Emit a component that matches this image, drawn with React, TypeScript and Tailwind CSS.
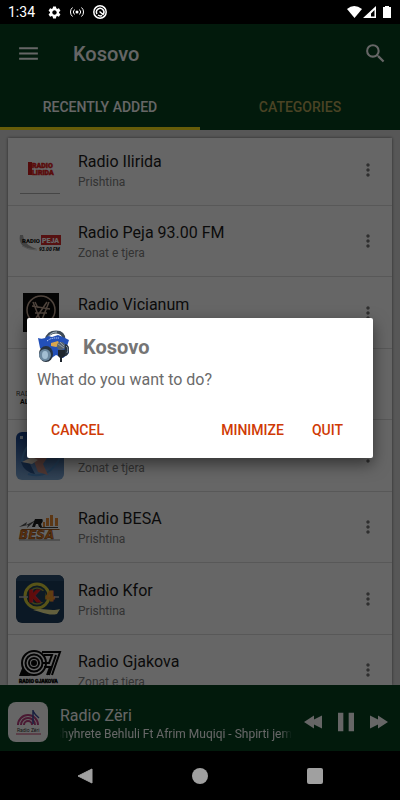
import { useState, type ReactNode } from 'react';
import { MdMenu, MdMoreVert, MdPause, MdSearch, MdSettings } from 'react-icons/md';

interface Station {
  name: string;
  city: string;
  logo: ReactNode;
}

function IliridaLogo() {
  return (
    <svg viewBox="0 0 48 48" className="size-full" aria-hidden="true">
      <g fontSize="7" fontWeight="900" fill="#e02020" stroke="#e02020" strokeWidth="0.500">
        <text x="16" y="22">RADIO</text>
        <text x="16" y="29">LIRIDA</text>
      </g>
      <rect x="12" y="16" width="4" height="13" fill="#d01c1c" />
      <path d="M4 47.500H44" stroke="#b0b0b0" />
    </svg>
  );
}

function PejaLogo() {
  return (
    <svg viewBox="0 0 48 48" className="size-full" aria-hidden="true">
      <path d="M4 18c-2 9 4 15 17 14-6-2-13-5-14-14z" fill="#a8a8a8" />
      <path d="M6 29q6 4 15 4" stroke="#cfcfcf" fill="none" />
      <rect x="25" y="18" width="20" height="10" fill="#d62b2b" />
      <text x="6" y="26" fontSize="6" fontWeight="900" fill="#111">RADIO</text>
      <text x="26" y="26" fontSize="7" fontWeight="900" fill="#fff">PEJA</text>
      <text x="23" y="34" fontSize="5" fontWeight="900" fontStyle="italic" fill="#222">93.00 FM</text>
    </svg>
  );
}

function VicianumLogo() {
  return (
    <svg viewBox="0 0 48 48" className="size-full" aria-hidden="true">
      <rect x="7" y="4" width="36" height="39" fill="#0a0a0a" />
      <g fill="none" stroke="#c6ab98" strokeWidth="1.500">
        <circle cx="25" cy="21" r="14" />
        <path d="M17 13l8 20 8-20M19 13l3 6M31 13L20 29M16 17l18 3M19 24h12" />
      </g>
    </svg>
  );
}

function AlbaLogo() {
  return (
    <svg viewBox="0 0 48 48" className="size-full" aria-hidden="true">
      <text x="0" y="36" fontSize="7" fill="#444">RADIO</text>
      <text x="4" y="44" fontSize="7" fontWeight="700" fill="#111">ALBA</text>
    </svg>
  );
}

function BlueLogo() {
  return (
    <svg viewBox="0 0 48 48" className="size-full rounded-md" aria-hidden="true">
      <defs>
        <linearGradient id="sky" x1="0" y1="0" x2="0" y2="1">
          <stop offset="0" stopColor="#123f8c" />
          <stop offset="1" stopColor="#7fa9d4" />
        </linearGradient>
      </defs>
      <rect width="48" height="48" fill="url(#sky)" />
      <rect x="4" y="4" width="3" height="3" fill="#c9d6e6" />
      <path d="M6 30Q8 8 30 6M12 42q20 6 32-16" fill="none" stroke="#4f8cc8" strokeWidth="2" />
      <path d="M16 24l15 2-4 6 5 11-10-3z" fill="#c58a80" />
      <path d="M5 30q3 10 14 12l-6-12z" fill="#2b5590" />
      <path d="M6 30l10-5 6 3-6 4z" fill="#eadfce" />
    </svg>
  );
}

function BesaLogo() {
  return (
    <svg viewBox="0 0 48 48" className="size-full" aria-hidden="true">
      <path d="M3 24l8-5-1 3 10-5 8-1-9 2-8 7 1-3z" fill="#555" />
      <path d="M16 24l3-8h7q2 2-1 5l1 3h-3l-1-3h-2l-1 3z" fill="#1c1c1c" />
      <path d="M27 24v-5h2v5zM30 23v-8h3v8zM34 23V12h3v11zM39 23v-8h3v8z" fill="#e58a35" />
      <path d="M24 24h18v1H24z" fill="#444" />
      <path d="M6 26h38l-1 1H5z" fill="#a85b1c" />
      <text x="3" y="36" fontSize="12" fontWeight="900" fontStyle="italic" fontFamily="DejaVu Sans" fill="#ea7c22" stroke="#6b3b16" strokeWidth="0.500">BESA</text>
      <path d="M3 37h41" stroke="#8b8b8b" />
    </svg>
  );
}

function KforLogo() {
  return (
    <svg viewBox="0 0 48 48" className="size-full rounded-md" aria-hidden="true">
      <rect width="48" height="48" fill="#1d3c5c" />
      <rect width="48" height="6" fill="#2c4f70" />
      <circle cx="21" cy="21" r="12" fill="#22425a" stroke="#ddd23c" strokeWidth="3" />
      <circle cx="21" cy="21" r="8" fill="none" stroke="#99a040" strokeWidth="1.500" />
      <path d="M3 22h9M38 22h5" stroke="#b9b9b9" strokeWidth="1.500" />
      <rect x="12" y="16" width="17" height="11" fill="#22425a" />
      <text x="12" y="27" fontSize="15" fontWeight="900" fontFamily="DejaVu Sans" fill="#f02020" stroke="#f02020">K</text>
      <text x="29" y="26" fontSize="14" fontWeight="900" fontFamily="DejaVu Sans" fill="#f39a2c" stroke="#f39a2c">4</text>
      <path d="M17 35c10-3 17 2 27-1l-3 5c-9 2-14-2-24-4z" fill="#f4ee9a" />
    </svg>
  );
}

function GjakovaLogo() {
  return (
    <svg viewBox="0 0 48 48" className="size-full" aria-hidden="true">
      <g fill="none" stroke="#080808" strokeWidth="2">
        <circle cx="18" cy="17" r="12" />
        <circle cx="18" cy="17" r="8.500" />
        <circle cx="18" cy="17" r="5" />
        <circle cx="18" cy="17" r="2" fill="#080808" />
        <path d="M27 17h6l3-8h-8M26 6h18l-8 23M40 9l-7 20M28 21h6l-3 8" />
      </g>
      <path d="M7 20q2 8 9 10H3z" fill="#080808" />
      <text x="3" y="37" fontSize="5" fontWeight="900" fill="#080808" stroke="#080808" strokeWidth="0.400">RADIO GJAKOVA</text>
    </svg>
  );
}

function ZeriLogo() {
  return (
    <svg viewBox="0 0 40 40" className="size-full" aria-hidden="true">
      <g fill="none" stroke="#b8407f" strokeWidth="2">
        <path d="M10 23a10 10 0 0 1 20 0" />
        <path d="M13 23a7 7 0 0 1 14 0" />
        <path d="M16 23a4 4 0 0 1 8 0" />
      </g>
      <path d="M25 8v14M25 9q2 4 6 7" stroke="#3c4c9c" strokeWidth="1.500" fill="none" />
      <text x="9" y="30" fontSize="5" fill="#333">Radio Zëri</text>
      <path d="M8 32h25" stroke="#c23a68" />
    </svg>
  );
}

function AppLogo() {
  return (
    <svg viewBox="0 0 34 34" className="size-[34px] shrink-0" aria-hidden="true">
      <path d="M9 10Q11 2 19 2t8 8" fill="none" stroke="#3d4a57" strokeWidth="3" />
      <path d="M11 7Q14 2 20 2" fill="none" stroke="#a9bac9" />
      <path d="M1 8q6 2 10-2l4 1 6-2 5 2 6 3-2 6 2 7-6 5-7-3-6 4-6-8-4-3z" fill="#2350b8" />
      <path d="M10 11l3-2 4-1h5" stroke="#dfe8ff" strokeDasharray="1 1" fill="none" />
      <path d="M14 13l7-2 2 4-4 2-5-1z" fill="#d9a64e" />
      <path d="M28 14q5 1 4 7t-5 5z" fill="#26313d" />
      <path d="M29 16q3 2 1 7" stroke="#8294a5" fill="none" />
      <ellipse cx="9" cy="24" rx="7" ry="8" fill="#27333f" />
      <ellipse cx="8" cy="25" rx="6" ry="6" fill="#6b879f" />
      <ellipse cx="8" cy="25" rx="3" ry="4" fill="#a3bed3" />
      <circle cx="24" cy="16" r="4" fill="#566370" />
      <path d="M21 14l6 4M23 12l4 4" stroke="#a0abb5" strokeWidth="0.800" />
      <path d="M21 20h7v6l-3 2v4h-2v-4l-2-2z" fill="#1e252d" />
    </svg>
  );
}

const stations: Station[] = [
  { name: 'Radio Ilirida', city: 'Prishtina', logo: <IliridaLogo /> },
  { name: 'Radio Peja 93.00 FM', city: 'Zonat e tjera', logo: <PejaLogo /> },
  { name: 'Radio Vicianum', city: 'Prishtina', logo: <VicianumLogo /> },
  { name: 'Radio Alba', city: 'Prishtina', logo: <AlbaLogo /> },
  { name: 'Radio Blue', city: 'Zonat e tjera', logo: <BlueLogo /> },
  { name: 'Radio BESA', city: 'Prishtina', logo: <BesaLogo /> },
  { name: 'Radio Kfor', city: 'Prishtina', logo: <KforLogo /> },
  { name: 'Radio Gjakova', city: 'Zonat e tjera', logo: <GjakovaLogo /> },
];

function StatusBar() {
  return (
    <div className="flex h-6 shrink-0 items-center bg-black px-2 text-white">
      <span className="text-sm">1:34</span>
      <MdSettings size={15} className="ml-3" />
      <svg viewBox="0 0 14 12" className="ml-2 h-3 w-3.5" fill="none" stroke="currentColor" aria-hidden="true">
        <circle cx="7" cy="6" r="1.500" fill="currentColor" stroke="none" />
        <path d="M4.500 3.500a3.500 3.500 0 0 0 0 5M9.500 3.500a3.500 3.500 0 0 1 0 5M2.500 1.500a6 6 0 0 0 0 9M11.500 1.500a6 6 0 0 1 0 9" />
      </svg>
      <svg viewBox="0 0 16 16" className="ml-2 size-4" fill="none" stroke="currentColor" aria-hidden="true">
        <circle cx="8" cy="8" r="6.200" strokeWidth="1.500" />
        <path d="M5 10a3.700 3.700 0 1 1 6 .5L7.500 7.500M6 11q2 1.500 4 .5" strokeWidth="1.500" />
      </svg>
      <svg viewBox="0 0 46 14" className="ml-auto h-3.5 w-[46px]" fill="currentColor" aria-hidden="true">
        <path d="M1 4q7-6 15 0L8.500 13z" />
        <path d="M30 1v12H17zM28.500 5v6.500H25V8.500z" fillRule="evenodd" />
        <path d="M39 2V1h4v1h2v11h-8V2z" />
      </svg>
    </div>
  );
}

function StationRow({ station }: { station: Station }) {
  return (
    <li className="flex items-center border-b border-[#dcdcdc] px-2 odd:h-[72px] even:h-[71px]">
      <div className="size-12 shrink-0">{station.logo}</div>
      <div className="ml-3.5 min-w-0 flex-1 pt-0.5">
        <p className="truncate text-base leading-5 text-[#1c1c1c]">{station.name}</p>
        <p className="mt-0.5 truncate text-xs leading-4 text-[#808080]">{station.city}</p>
      </div>
      <button type="button" aria-label={`Options for ${station.name}`} className="px-1.5 text-[#757575]">
        <MdMoreVert size={20} />
      </button>
    </li>
  );
}

function Player() {
  return (
    <footer className="flex h-[66px] shrink-0 items-center bg-[#054120] pt-2 pr-3 pl-2 text-white">
      <div className="size-10 shrink-0 overflow-hidden rounded-lg bg-white">
        <ZeriLogo />
      </div>
      <div className="ml-3 min-w-0 flex-1 pt-1">
        <p className="text-base leading-5">Radio Zëri</p>
        <p className="flex justify-end overflow-hidden text-xs leading-4 whitespace-nowrap mask-x-from-95% mask-x-to-100%">
          Shyhrete Behluli Ft Afrim Muqiqi - Shpirti jem
        </p>
      </div>
      <div className="ml-3 flex items-center gap-2">
        <button type="button" aria-label="Previous">
          <svg viewBox="0 0 18 14" className="h-3.5 w-[18px]" fill="currentColor">
            <path d="M0 7l10-6.500v4L18 .5v13l-8-4v4z" />
          </svg>
        </button>
        <button type="button" aria-label="Pause">
          <MdPause size={32} />
        </button>
        <button type="button" aria-label="Next">
          <svg viewBox="0 0 18 14" className="h-3.5 w-[18px]" fill="currentColor">
            <path d="M18 7L8 .5v4L0 .5v13l8-4v4z" />
          </svg>
        </button>
      </div>
    </footer>
  );
}

function NavigationBar() {
  return (
    <nav className="flex h-[49px] shrink-0 items-center justify-center gap-[99px] bg-black text-[#a0a0a0]">
      <button type="button" aria-label="Back">
        <svg viewBox="0 0 16 16" className="size-4" fill="currentColor">
          <path d="M15 1v14L1 8z" stroke="currentColor" strokeLinejoin="round" />
        </svg>
      </button>
      <button type="button" aria-label="Home" className="size-4 rounded-full bg-current" />
      <button type="button" aria-label="Recent apps" className="size-4 rounded-xs bg-current" />
    </nav>
  );
}

function QuitDialog({ onClose }: { onClose: () => void }) {
  return (
    <div className="absolute inset-0 flex items-center justify-center bg-black/60 px-[27px]">
      <div
        role="dialog"
        aria-modal="true"
        aria-labelledby="quit-title"
        className="w-full max-w-md rounded-xs bg-white px-2.5 pt-3 pb-2.5 shadow-[0_6px_16px_rgba(0,0,0,0.5)]"
      >
        <div className="flex items-center gap-3">
          <AppLogo />
          <h2 id="quit-title" className="text-xl leading-8 font-bold text-[#757575]">Kosovo</h2>
        </div>
        <p className="mt-1 text-base leading-6 text-[#6b6b6b]">What do you want to do?</p>
        <div className="mt-5 flex h-9 items-center pr-3 pl-2 text-sm font-medium text-[#cf3a05]">
          <button type="button" className="h-9 px-1.5" onClick={onClose}>CANCEL</button>
          <button type="button" className="ml-auto h-9 px-2" onClick={onClose}>MINIMIZE</button>
          <button type="button" className="ml-3 h-9 px-2" onClick={onClose}>QUIT</button>
        </div>
      </div>
    </div>
  );
}

export default function App() {
  const [dialogOpen, setDialogOpen] = useState(true);

  return (
    <div className="flex h-screen flex-col overflow-hidden bg-black font-[Roboto,sans-serif]">
      <StatusBar />

      <div className="relative flex min-h-0 flex-1 flex-col">
        {/* App bar and tabs */}
        <header className="shrink-0 bg-[#054120] text-white">
          <div className="flex h-[58px] items-center pr-3 pl-4">
            <button type="button" aria-label="Menu">
              <MdMenu size={25} />
            </button>
            <h1 className="ml-8 flex-1 pt-0.5 text-xl font-medium">Kosovo</h1>
            <button type="button" aria-label="Search">
              <MdSearch size={25} />
            </button>
          </div>
          <div role="tablist" className="grid grid-cols-2 text-sm font-medium">
            <button type="button" role="tab" aria-selected="true" className="h-12 border-b-3 border-[#ffe81a] pt-1">
              RECENTLY ADDED
            </button>
            <button type="button" role="tab" aria-selected="false" className="h-12 border-b-3 border-transparent pt-1 text-[#b9a85a]">
              CATEGORIES
            </button>
          </div>
        </header>

        {/* Station list */}
        <main className="min-h-0 flex-1 overflow-hidden bg-[#dadada] px-2 pt-2">
          <div className="h-full overflow-hidden bg-white shadow-[0_0_3px_rgba(0,0,0,0.5)]">
            <ul className="-mt-1">
              {stations.map((station) => (
                <StationRow key={station.name} station={station} />
              ))}
            </ul>
          </div>
        </main>

        <Player />
        {dialogOpen && <QuitDialog onClose={() => setDialogOpen(false)} />}
      </div>

      <NavigationBar />
    </div>
  );
}
